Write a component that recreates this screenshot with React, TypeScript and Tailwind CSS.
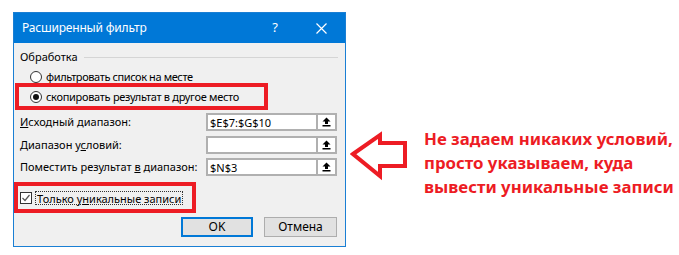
import React from "react";

function UpIcon() {
  return (
    <svg width="9" height="10" viewBox="0 0 9 10" className="block">
      <polygon points="0.5,4.5 4.5,0.5 8.5,4.5 6,4.5 6,7 3,7 3,4.5" fill="#000" />
      <rect x="0.5" y="8" width="8" height="1.5" fill="#000" />
    </svg>
  );
}

function RangeInput({ value }: { value: string }) {
  return (
    <div className="w-[131px] h-[18px] border-2 border-[#b0b0b0] bg-white flex shrink-0">
      <div className="flex-1 flex items-center pl-[2px] leading-none">{value}</div>
      <div className="w-[19px] border-l-2 border-[#b0b0b0] bg-white flex items-center justify-center">
        <UpIcon />
      </div>
    </div>
  );
}

function Radio({ checked }: { checked?: boolean }) {
  return (
    <div className="w-[12px] h-[12px] rounded-full border border-[#333] bg-white flex items-center justify-center shrink-0">
      {checked && <div className="w-[6px] h-[6px] rounded-full bg-[#111]" />}
    </div>
  );
}

export default function App() {
  return (
    <div className="w-[679px] h-[255px] bg-white flex items-start overflow-hidden font-['Noto_Sans',sans-serif]">
      <div className="ml-[13px] mt-[12px] w-[333px] h-[235px] shrink-0 border border-[#1a7fd4] bg-[#f0f0f0] relative flex flex-col text-[11px] text-black whitespace-nowrap">
        <div className="h-[30px] bg-[#0078d7] text-white flex items-center pl-[8px] pr-[18px]">
          <span className="flex-1 text-[12px] tracking-[-0.2px]">Расширенный фильтр</span>
          <span className="text-[13px] mr-[38px]">?</span>
          <svg width="11" height="11" viewBox="0 0 11 11">
            <path d="M0.5 0.5 L10.5 10.5 M10.5 0.5 L0.5 10.5" stroke="#fff" strokeWidth="1.2" />
          </svg>
        </div>
        <div className="flex flex-col pl-[6px] pr-[7px]">
          <div className="mt-[6px] h-[16px] flex items-center">
            <span>Обработка</span>
            <div className="flex-1 ml-[6px] h-px bg-[#d5d5d5]" />
          </div>
          <div className="mt-[4px] h-[16px] flex items-center pl-[10px] gap-[4px]">
            <Radio />
            <span className="tracking-[-0.4px]">фильтровать список на месте</span>
          </div>
          <div className="mt-[4px] h-[16px] flex items-center pl-[10px] gap-[4px]">
            <Radio checked />
            <span className="tracking-[-0.3px]">
              скопировать результат в <span className="underline">д</span>ругое место
            </span>
          </div>
          <div className="mt-[8px] h-[18px] flex items-center">
            <span className="w-[186px] shrink-0">
              <span className="underline">И</span>сходный диапазон:
            </span>
            <RangeInput value="$E$7:$G$10" />
          </div>
          <div className="mt-[5px] h-[18px] flex items-center">
            <span className="w-[186px] shrink-0">
              Диапазон у<span className="underline">с</span>ловий:
            </span>
            <RangeInput value="" />
          </div>
          <div className="mt-[4px] h-[18px] flex items-center">
            <span className="w-[186px] shrink-0">
              Поместить результат <span className="underline">в</span> диапазон:
            </span>
            <RangeInput value="$N$3" />
          </div>
          <div className="mt-[15px] h-[14px] flex items-center">
            <div className="w-[12px] h-[12px] border border-[#333] bg-white flex items-center justify-center shrink-0">
              <svg width="10" height="10" viewBox="0 0 10 10">
                <path d="M1.5 5 L4 7.5 L8.5 2" stroke="#555" strokeWidth="1.2" fill="none" />
              </svg>
            </div>
            <span className="ml-[3px] h-[14px] px-[1px] border border-dotted border-[#333] flex items-center leading-none">
              Только у<span className="underline">н</span>икальные записи
            </span>
          </div>
          <div className="mt-[12px] flex justify-end gap-[11px] pr-[1px]">
            <div className="w-[72px] h-[20px] border-2 border-[#0078d7] bg-[#e1e1e1] flex items-center justify-center text-[12px]">
              OK
            </div>
            <div className="w-[73px] h-[20px] border border-[#adadad] bg-[#e1e1e1] flex items-center justify-center text-[12px]">
              Отмена
            </div>
          </div>
        </div>
        <div className="absolute left-[1px] top-[70px] w-[253px] h-[27px] border-4 border-[#ed1c24]" />
        <div className="absolute left-0 top-[169px] w-[182px] h-[31px] border-4 border-[#ed1c24]" />
      </div>
      <svg width="60" height="52" viewBox="0 0 60 52" className="ml-[4px] mt-[130px] shrink-0">
        <polygon
          points="3,24 30,5 30,13 55,13 55,36 30,36 30,46"
          fill="none"
          stroke="#ed1c24"
          strokeWidth="4"
          strokeLinejoin="miter"
        />
      </svg>
      <div className="ml-[14px] mt-[127px] text-[16.8px] leading-[24px] font-bold text-[#ed1c24] whitespace-nowrap">
        Не задаем никаких условий,
        <br />
        просто указываем, куда
        <br />
        вывести уникальные записи
      </div>
    </div>
  );
}
